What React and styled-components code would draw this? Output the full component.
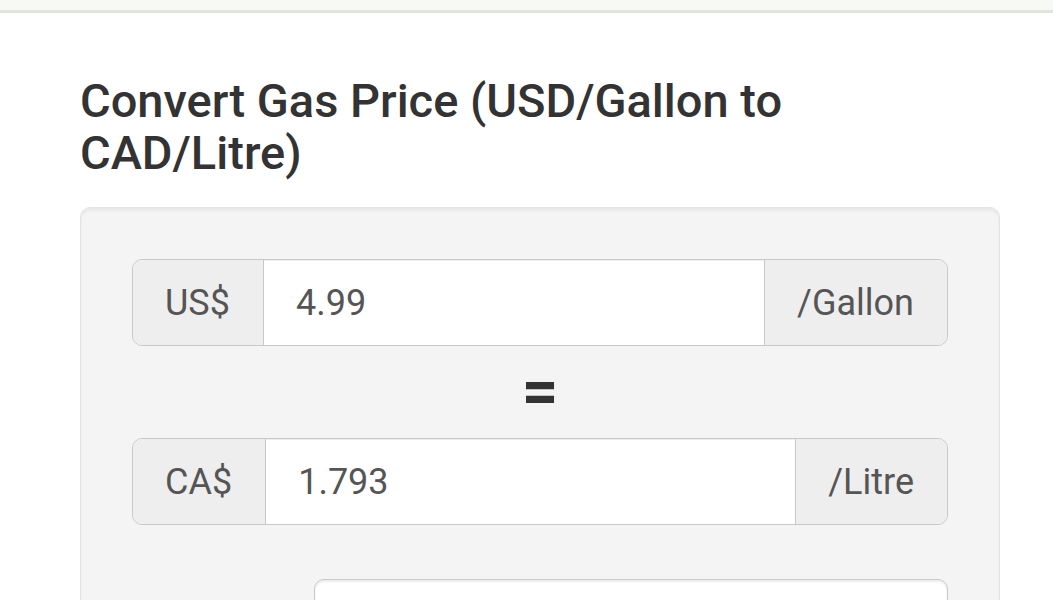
import React from "react";
import styled, { createGlobalStyle } from "styled-components";

const Global = createGlobalStyle`
  html, body { margin: 0; padding: 0; background: #fff; }
  body { font-family: Roboto, "Noto Sans", "Liberation Sans", sans-serif; color: #333; }
  * { box-sizing: border-box; }
`;

const TopBar = styled.div`
  height: 13px;
  background: #f7f9f4;
  border-bottom: 3px solid #dfe6dc;
`;

const Container = styled.main`
  padding: 0 53px 0 80px;
`;

const Title = styled.h1`
  margin: 62px 0 28px;
  font-size: 47px;
  line-height: 52px;
  font-weight: 500;
  color: #333;
  letter-spacing: 0;
`;

const Well = styled.section`
  background: #f4f4f4;
  border: 1px solid #e3e3e3;
  border-radius: 10px;
  box-shadow: inset 0 3px 3px rgba(0, 0, 0, 0.05);
  padding: 51px 51px 60px;
  display: flex;
  flex-direction: column;
`;

const Group = styled.div`
  display: flex;
  height: 87px;
  border: 1px solid #c8c8c8;
  border-radius: 10px;
  overflow: hidden;
  font-size: 36px;
  color: #555;
`;

const Addon = styled.span`
  display: flex;
  align-items: center;
  padding: 0 33px 0 32px;
  background: #eee;
  ${(p) => (p.$side === "left" ? "border-right: 1px solid #c8c8c8;" : "border-left: 1px solid #c8c8c8;")}
  white-space: nowrap;
`;

const Field = styled.input`
  flex: 1;
  min-width: 0;
  border: 0;
  background: #fff;
  padding: 0 32px;
  font: inherit;
  color: #555;
  outline: none;
  box-shadow: inset 0 1px 1px rgba(0, 0, 0, 0.075);
`;

const Equals = styled.div`
  text-align: center;
  font-size: 64px;
  font-weight: 700;
  line-height: 92px;
  height: 92px;
  color: #333;
`;

const Row = styled.div`
  display: grid;
  grid-template-columns: 182px 1fr;
  margin-top: 54px;
`;

const Select = styled.div`
  height: 87px;
  background: #fff;
  border: 1px solid #c8c8c8;
  border-radius: 10px;
  box-shadow: inset 0 2px 2px rgba(0, 0, 0, 0.075);
`;

function PriceGroup({ prefix, value, suffix }) {
  return (
    <Group>
      <Addon $side="left">{prefix}</Addon>
      <Field defaultValue={value} />
      <Addon $side="right">{suffix}</Addon>
    </Group>
  );
}

export default function App() {
  return (
    <>
      <Global />
      <TopBar />
      <Container>
        <Title>Convert Gas Price (USD/Gallon to CAD/Litre)</Title>
        <Well>
          <PriceGroup prefix="US$" value="4.99" suffix="/Gallon" />
          <Equals>=</Equals>
          <PriceGroup prefix="CA$" value="1.793" suffix="/Litre" />
          <Row>
            <span />
            <Select />
          </Row>
        </Well>
      </Container>
    </>
  );
}
